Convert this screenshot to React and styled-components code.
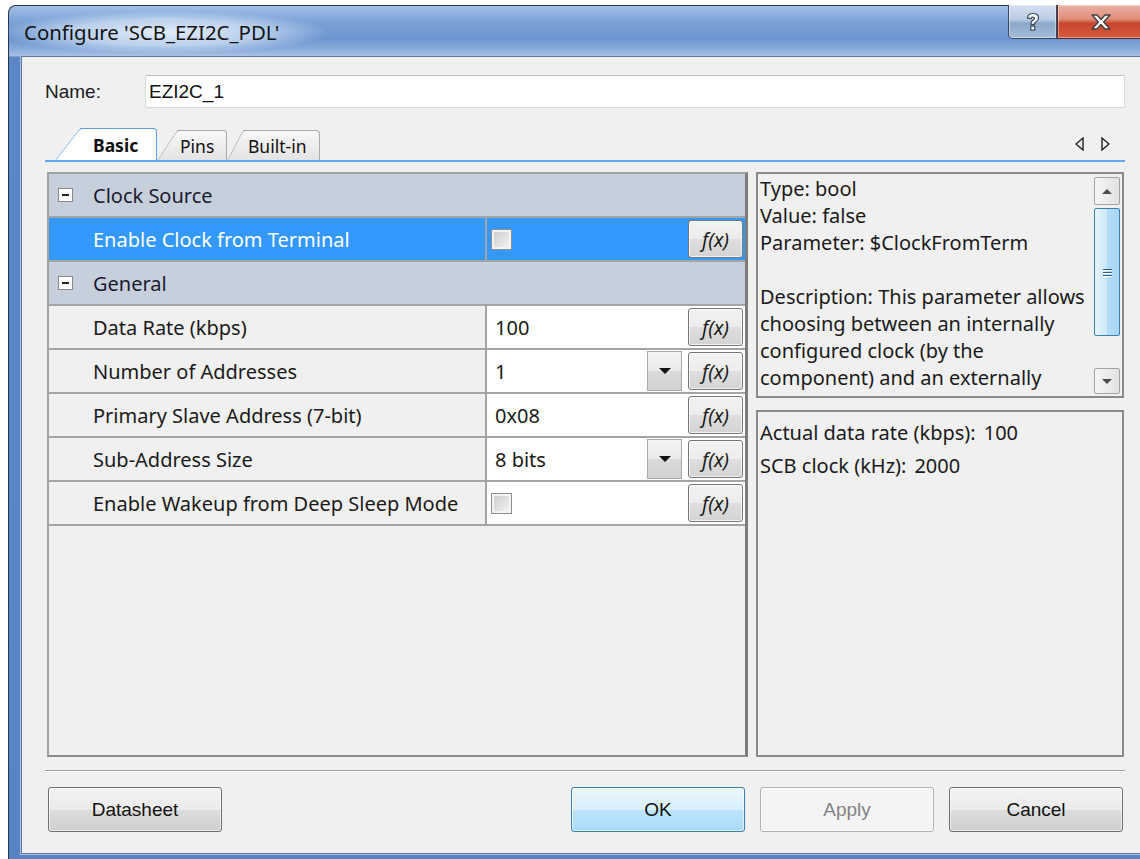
import styled, { createGlobalStyle } from "styled-components";

const uiFont = `"Noto Sans", "Open Sans", sans-serif`;
const dlgFont = `"Liberation Sans", Arial, sans-serif`;

const GlobalStyle = createGlobalStyle`
  html, body {
    margin: 0;
    padding: 0;
    background: #ffffff;
  }
  body {
    width: 1140px;
    height: 859px;
    overflow: hidden;
  }
`;

const Window = styled.div`
  margin: 5px 0 0 8px;
  width: 1160px;
  height: 870px;
  box-sizing: border-box;
  padding: 0 12px;
  border: 1px solid #26364d;
  border-bottom: 0;
  border-radius: 8px 8px 0 0;
  background: linear-gradient(
    180deg,
    #a3bfe5 0px,
    #7ba2d7 16px,
    #6b95cf 32px,
    #86a9da 42px,
    #a6c0e4 50px,
    #5b87c6 51px,
    #5684c4 100%
  );
`;

const TitleBar = styled.div`
  height: 50px;
  display: flex;
  align-items: flex-start;
`;

const Title = styled.div`
  margin: 5px 0 0 -20px;
  padding: 7px 50px 8px 23px;
  font: 20.4px ${uiFont};
  color: #141414;
  white-space: nowrap;
  background: radial-gradient(
    closest-side,
    rgba(232, 241, 252, 0.95),
    rgba(214, 228, 246, 0.7) 60%,
    rgba(214, 228, 246, 0)
  );
`;

const Captions = styled.div`
  display: flex;
  margin: -1px 10px 0 auto;
`;

const CaptionButton = styled.div`
  width: ${(p) => (p.$close ? 88 : 49)}px;
  height: 34px;
  box-sizing: border-box;
  display: flex;
  align-items: center;
  justify-content: center;
  border: 1px solid ${(p) => (p.$close ? "#5a2a24" : "#3a4a62")};
  border-top: 0;
  border-radius: ${(p) => (p.$close ? "0 0 5px 0" : "0 0 0 5px")};
  box-shadow: inset 0 0 0 1px rgba(255, 255, 255, 0.4);
  background: ${(p) =>
    p.$close
      ? "linear-gradient(180deg, #eab2a4 0%, #df8f7a 42%, #c8452c 56%, #d45d40 100%)"
      : "linear-gradient(180deg, #d3dfee 0%, #b9cbe3 44%, #8ea8cb 56%, #a6bcdb 100%)"};
`;

const HelpIcon = () => (
  <svg width="16" height="20" viewBox="0 0 16 20">
    <path
      d="M2.5 6.2C2.7 3 5 1.5 8 1.5c3.3 0 5.5 1.8 5.5 4.5 0 2.1-1.2 3.1-2.6 3.9-1 .6-1.3 1-1.3 1.9v.6H6v-.9c0-1.7.6-2.6 2-3.4 1-.6 1.4-.9 1.4-1.7 0-.8-.6-1.3-1.5-1.3-1 0-1.6.6-1.7 1.6z M5.8 14.2h4v4h-4z"
      fill="#ffffff"
      stroke="#3a485c"
      strokeWidth="1.2"
      strokeLinejoin="round"
    />
  </svg>
);

const Body = styled.div`
  height: 798px;
  box-sizing: border-box;
  border: 1px solid #61779a;
  box-shadow: 0 0 0 1px #a9c1e2;
  background: #f0f0f0;
  padding: 18px 29px 0 23px;
  display: flex;
  flex-direction: column;
`;

const NameRow = styled.div`
  display: flex;
  align-items: center;
  height: 33px;
`;

const NameLabel = styled.div`
  width: 100px;
  font: 19px ${dlgFont};
  color: #1a1a1a;
`;

const NameField = styled.div`
  flex: 1;
  height: 33px;
  box-sizing: border-box;
  border: 1px solid #d3d6db;
  border-top-color: #b9bcc2;
  border-radius: 2px;
  background: #ffffff;
  padding-left: 3px;
  font: 19px/31px ${dlgFont};
  color: #111;
`;

const TabStrip = styled.div`
  margin-top: 20px;
  height: 34px;
  box-sizing: border-box;
  border-bottom: 2px solid #64a7ee;
  display: flex;
  align-items: flex-end;
`;

const Tab = styled.div`
  position: relative;
  z-index: ${(p) => (p.$active ? 2 : 1)};
  width: ${(p) => p.$width}px;
  height: ${(p) => (p.$active ? 32 : 30)}px;
  box-sizing: border-box;
  margin-left: ${(p) => p.$lead}px;
  padding-left: ${(p) => p.$pad}px;
  display: flex;
  align-items: center;
  font: ${(p) => (p.$active ? 700 : 400)} 17.5px ${uiFont};
  color: #111;
  border-top: 1px solid ${(p) => (p.$active ? "#5d9fe6" : "#ababab")};
  border-right: 1px solid ${(p) => (p.$active ? "#5d9fe6" : "#ababab")};
  border-top-right-radius: 4px;
  background: ${(p) =>
    p.$active ? "#ffffff" : "linear-gradient(180deg, #f8f8f8, #e3e3e3)"};

  &::before {
    content: "";
    position: absolute;
    z-index: -1;
    left: -${(p) => p.$slant}px;
    top: -1px;
    bottom: 0;
    width: ${(p) => p.$slant + 12}px;
    border-top: 1px solid ${(p) => (p.$active ? "#5d9fe6" : "#ababab")};
    border-left: 1px solid ${(p) => (p.$active ? "#5d9fe6" : "#ababab")};
    border-top-left-radius: 3px;
    background: ${(p) =>
      p.$active ? "#ffffff" : "linear-gradient(180deg, #f8f8f8, #e3e3e3)"};
    transform-origin: bottom left;
    transform: skewX(-${(p) => p.$angle}deg);
  }
`;

const TabScroll = styled.div`
  margin: 0 15px 9px auto;
  display: flex;
  gap: 17px;
`;

const TabPage = styled.div`
  margin-left: 2px;
  padding-top: 10px;
  display: grid;
  grid-template-columns: 701px 368px;
  column-gap: 8px;
`;

const PropGrid = styled.div`
  height: 585px;
  box-sizing: border-box;
  border: 2px solid #a2a2a2;
  border-right: 3px solid #7c7c7c;
  border-bottom-color: #8c8c8c;
  background: #f0f0f0;
  display: grid;
  grid-template-columns: 436px 1fr;
  grid-auto-rows: 44px;
  align-content: start;
`;

const Category = styled.div`
  grid-column: 1 / -1;
  box-sizing: border-box;
  border-bottom: 2px solid #a4a4a4;
  background: #c6cfdc;
  display: flex;
  align-items: center;
  padding-left: 9px;
  font: 20px ${uiFont};
  color: #1b1b2e;
`;

const Toggle = styled.span`
  position: relative;
  width: 15px;
  height: 14px;
  box-sizing: border-box;
  margin-right: 20px;
  border: 1px solid #8a8a8a;
  background: #ffffff;

  &::after {
    content: "";
    position: absolute;
    left: 3px;
    right: 3px;
    top: 5px;
    height: 2px;
    background: #222;
  }
`;

const LabelCell = styled.div`
  box-sizing: border-box;
  border-bottom: 2px solid #a4a4a4;
  background: ${(p) => (p.$selected ? "#3399ff" : "#f0f0f0")};
  color: ${(p) => (p.$selected ? "#ffffff" : "#1a1a1a")};
  display: flex;
  align-items: center;
  padding-left: 44px;
  font: 20px ${uiFont};
  white-space: nowrap;
`;

const ValueCell = styled.div`
  box-sizing: border-box;
  border-left: 2px solid #a4a4a4;
  border-bottom: 2px solid #a4a4a4;
  background: ${(p) => (p.$selected ? "#3399ff" : "#ffffff")};
  display: flex;
  align-items: center;
  padding: 0 0 0 8px;
  font: 20px ${uiFont};
  color: #1a1a1a;
`;

const ValueText = styled.span`
  flex: 1;
`;

const CheckBox = styled.span`
  width: 21px;
  height: 21px;
  box-sizing: border-box;
  margin-left: -4px;
  border: 1px solid #8f8f8f;
  box-shadow: inset 0 0 0 2px #f4f4f4;
  background: linear-gradient(135deg, #c9c9c9, #f6f6f6);
`;

const Spacer = styled.span`
  flex: 1;
`;

const DropButton = styled.span`
  width: 35px;
  height: 40px;
  box-sizing: border-box;
  margin-right: 6px;
  border: 1px solid #a9a9a9;
  background: linear-gradient(180deg, #f4f4f4 0%, #eaeaea 50%, #dadada 51%, #d2d2d2 100%);
  display: flex;
  align-items: center;
  justify-content: center;

  &::after {
    content: "";
    border-left: 6px solid transparent;
    border-right: 6px solid transparent;
    border-top: 6px solid #111;
  }
`;

const FxButton = styled.span`
  width: 55px;
  height: 38px;
  box-sizing: border-box;
  margin-right: 2px;
  border: 1px solid #767676;
  border-radius: 3px;
  box-shadow: inset 0 0 0 1px rgba(255, 255, 255, 0.7);
  background: linear-gradient(180deg, #f3f3f3 0%, #ececec 50%, #dfdfdf 51%, #d3d3d3 100%);
  display: flex;
  align-items: center;
  justify-content: center;
  font: italic 19.5px ${uiFont};
  color: #1a1a1a;
`;

const SideColumn = styled.div`
  display: grid;
  grid-template-rows: 226px 347px;
  row-gap: 12px;
`;

const InfoPanel = styled.div`
  box-sizing: border-box;
  border: 2px solid #8a8a8a;
  background: #f0f0f0;
  display: flex;
  overflow: hidden;
`;

const DescText = styled.div`
  flex: 1;
  overflow: hidden;
  padding: 1px 0 0 2px;
  font: 20px/27px ${uiFont};
  color: #1a1a1a;
  white-space: pre;
`;

const ScrollBar = styled.div`
  width: 26px;
  margin: 3px 2px 2px 0;
  display: flex;
  flex-direction: column;
`;

const ScrollArrow = styled.div`
  height: ${(p) => p.$h}px;
  box-sizing: border-box;
  border: 1px solid #a3a3a3;
  border-radius: 2px;
  background: linear-gradient(90deg, #f6f6f6, #e2e2e2);
  display: flex;
  align-items: center;
  justify-content: center;

  &::after {
    content: "";
    border-left: 5px solid transparent;
    border-right: 5px solid transparent;
    ${(p) =>
      p.$up ? "border-bottom: 5px solid #4d4d4d;" : "border-top: 5px solid #4d4d4d;"}
  }
`;

const Thumb = styled.div`
  height: 128px;
  margin-top: 3px;
  box-sizing: border-box;
  border: 1px solid #3c7fb1;
  border-radius: 2px;
  background: linear-gradient(90deg, #e8f4fc 0%, #cbe7f9 50%, #b3dcf6 51%, #a9d6f4 100%);
  display: flex;
  flex-direction: column;
  align-items: center;
  justify-content: center;
  gap: 2px;
`;

const Grip = styled.span`
  width: 9px;
  height: 1px;
  background: #2a5f85;
  box-shadow: 0 1px 0 #ffffff;
`;

const ScrollGap = styled.div`
  flex: 1;
`;

const StatsText = styled.div`
  padding: 4px 0 0 2px;
  font: 20px/33px ${uiFont};
  color: #1a1a1a;
`;

const StatValue = styled.span`
  margin-left: 8px;
`;

const Separator = styled.div`
  margin-top: 13px;
  border-top: 1px solid #a0a0a0;
  border-bottom: 1px solid #ffffff;
`;

const ButtonRow = styled.div`
  margin-top: 15px;
  display: flex;
  gap: 15px;
  padding: 0 2px 0 3px;
`;

const buttonSkins = {
  normal: {
    border: "#707070",
    bg: "linear-gradient(180deg, #f2f2f2 0%, #ebebeb 50%, #dddddd 51%, #cfcfcf 100%)",
    color: "#111111",
  },
  default: {
    border: "#3c7fb1",
    bg: "linear-gradient(180deg, #eaf6fd 0%, #d9f0fc 50%, #bee6fd 51%, #a7d9f5 100%)",
    color: "#111111",
  },
  disabled: {
    border: "#adb2b5",
    bg: "#f4f4f4",
    color: "#838383",
  },
};

const DialogButton = styled.div`
  width: 174px;
  height: 45px;
  box-sizing: border-box;
  margin-right: ${(p) => (p.$push ? "auto" : "0")};
  border: 1px solid ${(p) => buttonSkins[p.$skin].border};
  border-radius: 3px;
  box-shadow: inset 0 0 0 1px rgba(255, 255, 255, 0.6);
  background: ${(p) => buttonSkins[p.$skin].bg};
  color: ${(p) => buttonSkins[p.$skin].color};
  display: flex;
  align-items: center;
  justify-content: center;
  font: 19px ${dlgFont};
`;

const rows = [
  { category: "Clock Source" },
  { label: "Enable Clock from Terminal", kind: "check", selected: true },
  { category: "General" },
  { label: "Data Rate (kbps)", value: "100" },
  { label: "Number of Addresses", value: "1", kind: "combo" },
  { label: "Primary Slave Address (7-bit)", value: "0x08" },
  { label: "Sub-Address Size", value: "8 bits", kind: "combo" },
  { label: "Enable Wakeup from Deep Sleep Mode", kind: "check" },
];

const description = [
  "Type: bool",
  "Value: false",
  "Parameter: $ClockFromTerm",
  "",
  "Description: This parameter allows",
  "choosing between an internally",
  "configured clock (by the",
  "component) and an externally",
  "configured clock (by the user) for",
];

const CloseIcon = () => (
  <svg width="24" height="18" viewBox="0 0 24 18">
    <polygon
      points="3,2 8,2 12,6.5 16,2 21,2 14.6,9 21,16 16,16 12,11.5 8,16 3,16 9.4,9"
      fill="#ffffff"
      stroke="#3f3f3f"
      strokeWidth="1.3"
      strokeLinejoin="round"
    />
  </svg>
);

const TabArrows = () => (
  <TabScroll>
    <svg width="9" height="14" viewBox="0 0 9 14">
      <polygon points="8,1 1,7 8,13" fill="none" stroke="#222" strokeWidth="1.4" />
    </svg>
    <svg width="9" height="14" viewBox="0 0 9 14">
      <polygon points="1,1 8,7 1,13" fill="none" stroke="#222" strokeWidth="1.4" />
    </svg>
  </TabScroll>
);

const PropertyRow = ({ row }) => {
  if (row.category) {
    return (
      <Category>
        <Toggle />
        {row.category}
      </Category>
    );
  }
  return (
    <>
      <LabelCell $selected={row.selected}>{row.label}</LabelCell>
      <ValueCell $selected={row.selected}>
        {row.kind === "check" ? (
          <>
            <CheckBox />
            <Spacer />
          </>
        ) : (
          <ValueText>{row.value}</ValueText>
        )}
        {row.kind === "combo" && <DropButton />}
        <FxButton>f(x)</FxButton>
      </ValueCell>
    </>
  );
};

const App = () => {
  return (
    <>
      <GlobalStyle />
      <Window>
        <TitleBar>
          <Title>Configure 'SCB_EZI2C_PDL'</Title>
          <Captions>
            <CaptionButton>
              <HelpIcon />
            </CaptionButton>
            <CaptionButton $close>
              <CloseIcon />
            </CaptionButton>
          </Captions>
        </TitleBar>
        <Body>
          <NameRow>
            <NameLabel>Name:</NameLabel>
            <NameField>EZI2C_1</NameField>
          </NameRow>

          <TabStrip>
            <Tab $active $lead={35} $slant={25} $angle={38} $width={77} $pad={13}>
              Basic
            </Tab>
            <Tab $lead={20} $slant={20} $angle={34} $width={50} $pad={3}>
              Pins
            </Tab>
            <Tab $lead={16} $slant={16} $angle={28} $width={77} $pad={5}>
              Built-in
            </Tab>
            <TabArrows />
          </TabStrip>

          <TabPage>
            <PropGrid>
              {rows.map((row, idx) => (
                <PropertyRow key={idx} row={row} />
              ))}
            </PropGrid>
            <SideColumn>
              <InfoPanel>
                <DescText>
                  {description.map((line, idx) => (
                    <div key={idx}>{line || " "}</div>
                  ))}
                </DescText>
                <ScrollBar>
                  <ScrollArrow $up $h={28} />
                  <Thumb>
                    <Grip />
                    <Grip />
                    <Grip />
                  </Thumb>
                  <ScrollGap />
                  <ScrollArrow $h={26} />
                </ScrollBar>
              </InfoPanel>
              <InfoPanel>
                <StatsText>
                  <div>
                    Actual data rate (kbps):<StatValue>100</StatValue>
                  </div>
                  <div>
                    SCB clock (kHz):<StatValue>2000</StatValue>
                  </div>
                </StatsText>
              </InfoPanel>
            </SideColumn>
          </TabPage>

          <Separator />

          <ButtonRow>
            <DialogButton $skin="normal" $push>
              Datasheet
            </DialogButton>
            <DialogButton $skin="default">OK</DialogButton>
            <DialogButton $skin="disabled">Apply</DialogButton>
            <DialogButton $skin="normal">Cancel</DialogButton>
          </ButtonRow>
        </Body>
      </Window>
    </>
  );
};

export default App;
